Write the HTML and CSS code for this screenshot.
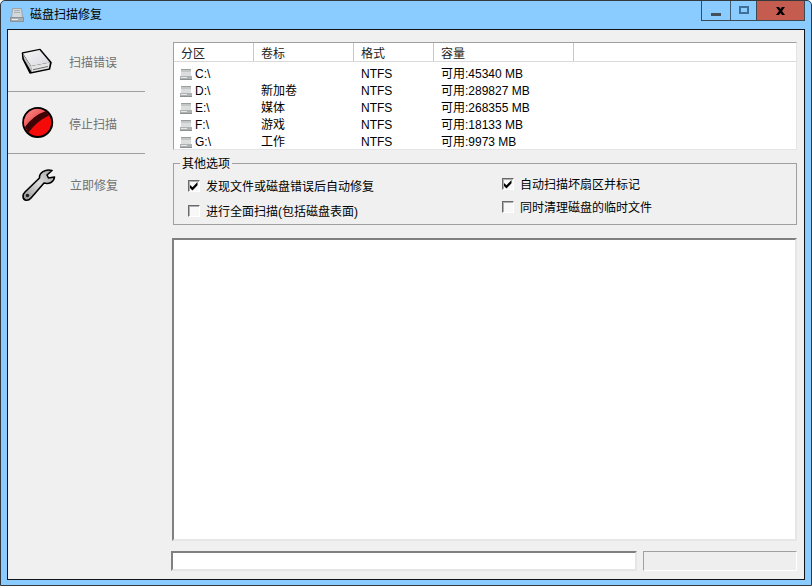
FILE: index.html
```html
<!DOCTYPE html>
<html lang="zh-CN">
<head>
    <meta charset="UTF-8">
    <title>磁盘扫描修复</title>
    <link rel="stylesheet" href="styles.css">
</head>
<body>
    <svg class="defs" width="0" height="0">
        <defs>
            <linearGradient id="driveTop" x1="0" y1="0" x2="1" y2="1">
                <stop offset="0" stop-color="#f6f6f6"/>
                <stop offset="0.7" stop-color="#e2e2e8"/>
                <stop offset="1" stop-color="#cfcfd4"/>
            </linearGradient>
            <linearGradient id="ballTop" x1="0" y1="0" x2="1" y2="1">
                <stop offset="0" stop-color="#ff8e8e"/>
                <stop offset="1" stop-color="#e02a2a"/>
            </linearGradient>
            <linearGradient id="steel" x1="1" y1="0" x2="0" y2="1">
                <stop offset="0" stop-color="#9a9a9a"/>
                <stop offset="0.45" stop-color="#dcdcdc"/>
                <stop offset="1" stop-color="#949494"/>
            </linearGradient>
        </defs>
        <symbol id="drive" viewBox="0 0 14 14">
            <rect x="2" y="1" width="10" height="3" fill="#c4c7c7"/>
            <rect x="2" y="1" width="10" height="1" fill="#9a9e9e"/>
            <rect x="2" y="4" width="10" height="4" fill="#dcdede"/>
            <rect x="1" y="8" width="12" height="4" fill="#aeb2b2"/>
            <rect x="2" y="9" width="6" height="1" fill="#e6e8e8"/>
            <rect x="1" y="11" width="12" height="1" fill="#8c9090"/>
        </symbol>
        <symbol id="tick" viewBox="0 0 10 10">
            <path d="M1 4l2.500 2.300L8.500 1v3.200L3.500 9.500 1 7z" fill="#000"/>
        </symbol>
    </svg>

    <div class="window">
        <div class="titlebar">
            <svg class="title-icon" width="16" height="16" viewBox="0 0 16 16">
                <path d="M3.500 1.500h9l1 9h-11z" fill="#d3d8da" stroke="#9aa3a7"/>
                <path d="M5 3.500h6M5 5.500h6" stroke="#a8b0b4"/>
                <rect x="1.500" y="10.500" width="13" height="4" fill="#a7afb3" stroke="#8b9397"/>
                <path d="M3 12.500h6" stroke="#e8eef2"/>
            </svg>
            <span class="title-text">磁盘扫描修复</span>
            <div class="controls">
                <div class="ctrl ctrl-min"><span class="min-glyph"></span></div>
                <div class="ctrl ctrl-max"><span class="max-glyph"></span></div>
                <div class="ctrl ctrl-close">
                    <svg width="9" height="8" viewBox="0 0 9 8">
                        <path d="M0 0h3l1.500 2L6 0h3L6 4l3 4H6L4.500 6 3 8H0l3-4z" fill="#000"/>
                    </svg>
                </div>
            </div>
        </div>

        <div class="client">
            <div class="sidebar">
                <div class="side-item">
                    <svg class="side-icon" width="36" height="32" viewBox="0 0 36 32">
                        <path d="M2.500 8L20 4.500 31 17.500 29.500 24 10 28 3 14z" fill="#000" stroke="#000" stroke-width="1.500" stroke-linejoin="round"/>
                        <path d="M3 8.500L19.500 5 30 17.500 11 21z" fill="url(#driveTop)"/>
                        <path d="M3 9l8 12 .5 6L4 14z" fill="#c4c4c4"/>
                        <path d="M11 21L30 17.500 28.800 23.500 11.500 27z" fill="#e4e4e4"/>
                        <path d="M13 24.300L28 21 27.800 22 13 25.300z" fill="#6a6a6a"/>
                    </svg>
                    <span class="side-label">扫描错误</span>
                </div>
                <div class="side-item">
                    <svg class="side-icon" width="36" height="32" viewBox="0 0 36 32">
                        <circle cx="17.700" cy="15.500" r="15.500" fill="#000"/>
                        <circle cx="17.700" cy="15.500" r="13.500" fill="#f50a0a"/>
                        <path d="M5 20.500A13.500 13.500 0 0 1 25.500 4.500Q13 9 5.500 20.500z" fill="url(#ballTop)"/>
                        <path d="M5 20Q13 8.500 26 4L29 8.500Q17 14 8.500 25.500z" fill="#3c0404"/>
                    </svg>
                    <span class="side-label">停止扫描</span>
                </div>
                <div class="side-item side-item-last">
                    <svg class="side-icon" width="36" height="34" viewBox="0 -1 36 34">
                        <path d="M32 1.500L27 6 28.500 9 34.500 8C34 13 29 15.500 24 14L11 29C8 32.500 3 32 3 27 3 25 4 24 5 23L19.500 9C19 4 25-.5 32 1.500z" fill="url(#steel)" stroke="#000" stroke-width="1.600" stroke-linejoin="round"/>
                        <circle cx="7.500" cy="26.500" r="1.800" fill="#222"/>
                    </svg>
                    <span class="side-label">立即修复</span>
                </div>
            </div>

            <div class="main">
                <div class="list">
                    <div class="list-head">
                        <span class="col col-part">分区</span>
                        <span class="col col-name">卷标</span>
                        <span class="col col-fs">格式</span>
                        <span class="col col-size">容量</span>
                    </div>
                    <div class="list-body">
                        <div class="list-row">
                            <span class="cell col-part"><svg class="drive" width="14" height="14"><use href="#drive"/></svg>C:\</span>
                            <span class="cell col-name"></span>
                            <span class="cell col-fs">NTFS</span>
                            <span class="cell col-size">可用:45340 MB</span>
                        </div>
                        <div class="list-row">
                            <span class="cell col-part"><svg class="drive" width="14" height="14"><use href="#drive"/></svg>D:\</span>
                            <span class="cell col-name">新加卷</span>
                            <span class="cell col-fs">NTFS</span>
                            <span class="cell col-size">可用:289827 MB</span>
                        </div>
                        <div class="list-row">
                            <span class="cell col-part"><svg class="drive" width="14" height="14"><use href="#drive"/></svg>E:\</span>
                            <span class="cell col-name">媒体</span>
                            <span class="cell col-fs">NTFS</span>
                            <span class="cell col-size">可用:268355 MB</span>
                        </div>
                        <div class="list-row">
                            <span class="cell col-part"><svg class="drive" width="14" height="14"><use href="#drive"/></svg>F:\</span>
                            <span class="cell col-name">游戏</span>
                            <span class="cell col-fs">NTFS</span>
                            <span class="cell col-size">可用:18133 MB</span>
                        </div>
                        <div class="list-row">
                            <span class="cell col-part"><svg class="drive" width="14" height="14"><use href="#drive"/></svg>G:\</span>
                            <span class="cell col-name">工作</span>
                            <span class="cell col-fs">NTFS</span>
                            <span class="cell col-size">可用:9973 MB</span>
                        </div>
                    </div>
                </div>

                <div class="group">
                    <span class="legend">其他选项</span>
                    <div class="opts opts-left">
                        <div class="opt"><span class="box"><svg width="10" height="10"><use href="#tick"/></svg></span>发现文件或磁盘错误后自动修复</div>
                        <div class="opt"><span class="box"></span>进行全面扫描(包括磁盘表面)</div>
                    </div>
                    <div class="opts opts-right">
                        <div class="opt"><span class="box"><svg width="10" height="10"><use href="#tick"/></svg></span>自动扫描坏扇区并标记</div>
                        <div class="opt"><span class="box"></span>同时清理磁盘的临时文件</div>
                    </div>
                </div>

                <div class="log"></div>

                <div class="bottom">
                    <div class="path-input"></div>
                    <div class="status"></div>
                </div>
            </div>
        </div>
    </div>
</body>
</html>
```

FILE: styles.css
```css
html, body {
    margin: 0;
    padding: 0;
    height: 100%;
}

body {
    font-family: "Liberation Sans", "Noto Sans CJK SC", sans-serif;
    font-size: 12px;
    color: #000;
    overflow: hidden;
}

.defs {
    display: block;
    height: 0;
}

.window {
    box-sizing: border-box;
    width: 812px;
    height: 586px;
    display: flex;
    flex-direction: column;
    background-color: #8accff;
    border: 1px solid #34393d;
    border-radius: 5px 5px 0 0;
    padding: 0 6px 5px 6px;
}

/* title bar */
.titlebar {
    height: 28px;
    display: flex;
    align-items: flex-start;
    flex-shrink: 0;
}

.title-icon {
    margin: 6px 0 0 2px;
}

.title-text {
    margin: 6px 0 0 5px;
    font-size: 12px;
    line-height: 17px;
}

.controls {
    margin-left: auto;
    display: flex;
    height: 20px;
    border: 1px solid #3c4a55;
    border-top: none;
    box-sizing: border-box;
}

.ctrl {
    display: flex;
    justify-content: center;
    align-items: center;
    box-sizing: border-box;
}

.ctrl-min {
    width: 29px;
    border-right: 1px solid #3c5a70;
}

.ctrl-max {
    width: 26px;
    border-right: 1px solid #3c4a55;
}

.ctrl-close {
    width: 47px;
    background-color: #c45c50;
}

.min-glyph {
    width: 10px;
    height: 3px;
    margin-top: 8px;
    background-color: #44515a;
}

.max-glyph {
    box-sizing: border-box;
    width: 10px;
    height: 8px;
    margin-bottom: 2px;
    border: 2px solid #3f6f96;
}

/* client area */
.client {
    flex: 1;
    display: flex;
    background-color: #f0f0f0;
    border: 1px solid #101418;
    min-height: 0;
}

.sidebar {
    width: 137px;
    flex-shrink: 0;
    display: flex;
    flex-direction: column;
}

.side-item {
    box-sizing: border-box;
    height: 62px;
    display: flex;
    align-items: center;
    border-bottom: 1px solid #a0a0a0;
    padding-left: 12px;
}

.side-item-last {
    border-bottom: none;
}

.side-icon {
    flex-shrink: 0;
}

.side-label {
    margin: 2px 0 0 13px;
    color: #707070;
    font-size: 12px;
}

.side-item-last .side-label {
    margin: 0 0 2px 14px;
}

.main {
    flex: 1;
    display: flex;
    flex-direction: column;
    padding: 12px 7px 8px 27px;
    min-width: 0;
}

/* drive list */
.list {
    box-sizing: border-box;
    height: 108px;
    margin-left: 1px;
    flex-shrink: 0;
    background-color: #fff;
    border: 1px solid #a0a0a0;
    border-bottom-color: #e4e4e4;
    border-right-color: #e4e4e4;
    overflow: hidden;
}

.list-head {
    display: flex;
    height: 19px;
    line-height: 23px;
    background-color: #fff;
    border-bottom: 1px solid #d9d9d9;
    box-sizing: border-box;
    color: #222;
}

.col {
    box-sizing: border-box;
    padding-left: 7px;
    border-right: 1px solid #c8c8c8;
}

.col-part {
    width: 80px;
}

.col-name {
    width: 100px;
}

.col-fs {
    width: 80px;
}

.col-size {
    width: 140px;
}

.list-body {
    padding-top: 4px;
}

.list-row {
    display: flex;
    height: 17px;
    line-height: 17px;
}

.cell {
    box-sizing: border-box;
    padding-left: 7px;
    white-space: nowrap;
}

.cell.col-part {
    display: flex;
    align-items: center;
    padding-left: 5px;
}

.drive {
    margin-right: 2px;
    flex-shrink: 0;
}

/* options */
.group {
    position: relative;
    box-sizing: border-box;
    height: 62px;
    flex-shrink: 0;
    margin: 13px 0 13px 1px;
    border: 1px solid #a0a0a0;
    display: flex;
}

.legend {
    position: absolute;
    top: -8px;
    left: 6px;
    padding: 0 2px;
    line-height: 16px;
    background-color: #f0f0f0;
}

.opts {
    display: flex;
    flex-direction: column;
}

.opts-left {
    width: 328px;
    padding: 13px 0 0 14px;
    gap: 8px;
    box-sizing: border-box;
}

.opts-right {
    padding: 11px 0 0 0;
    gap: 6px;
}

.opt {
    display: flex;
    align-items: center;
    height: 17px;
    white-space: nowrap;
}

.box {
    box-sizing: border-box;
    width: 12px;
    height: 12px;
    margin-right: 6px;
    flex-shrink: 0;
    background-color: #f8f8f8;
    border: 1px solid;
    border-color: #6a6a6a #fff #fff #6a6a6a;
    box-shadow: inset 1px 1px 0 #b0b0b0;
    display: flex;
}

.box svg {
    display: block;
}

/* log and bottom */
.log {
    flex: 1;
    background-color: #fff;
    border: 2px solid;
    border-color: #808080 #e6e6e6 #e6e6e6 #808080;
    box-sizing: border-box;
}

.bottom {
    display: flex;
    gap: 6px;
    height: 20px;
    flex-shrink: 0;
    margin-top: 10px;
    margin-left: -1px;
}

.path-input {
    box-sizing: border-box;
    width: 466px;
    background-color: #fff;
    border: 2px solid;
    border-color: #808080 #e6e6e6 #e6e6e6 #808080;
}

.status {
    box-sizing: border-box;
    flex: 1;
    background-color: #eee;
    border: 1px solid;
    border-color: #a0a0a0 #fff #fff #a0a0a0;
}
```
